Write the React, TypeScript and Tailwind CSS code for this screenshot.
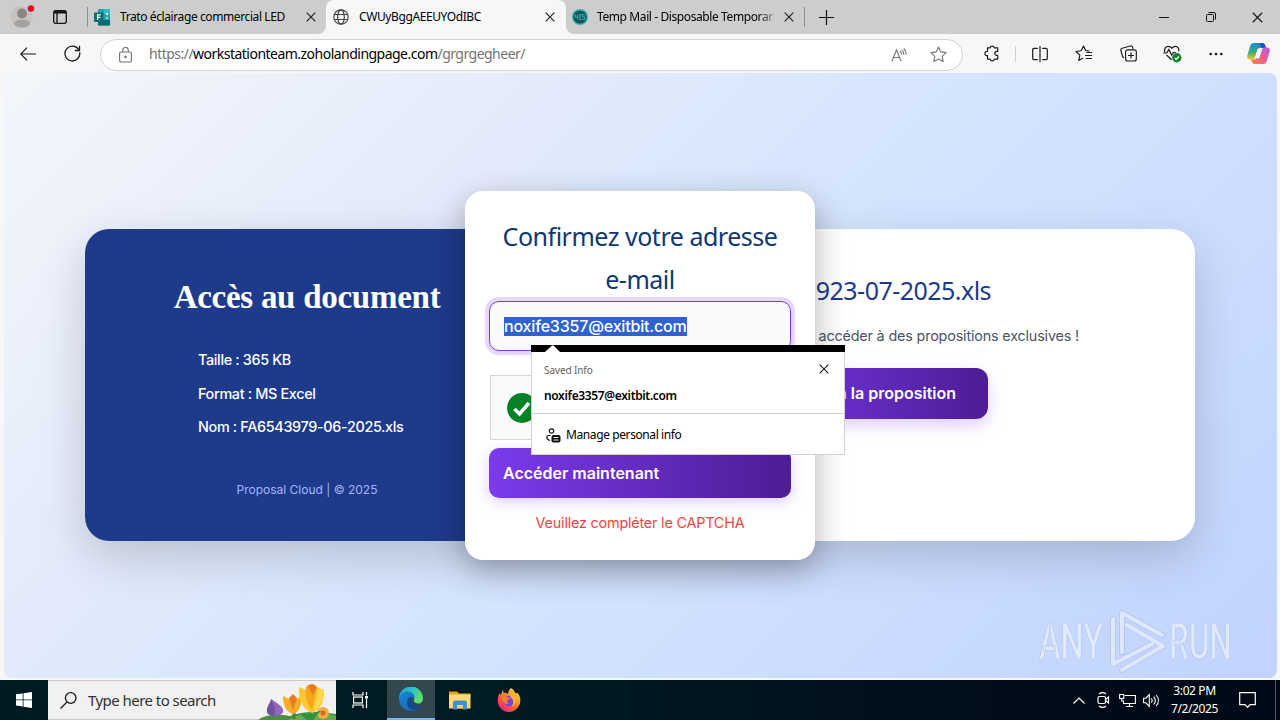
import type { ReactNode } from "react";

const UI = "font-['Noto_Sans','Open_Sans',sans-serif]";
const INTER = "font-['Inter',sans-serif]";

function CloseIcon({ size = 10 }: { size?: number }) {
  return (
    <svg width={size} height={size} viewBox="0 0 10 10" fill="none" stroke="#1b1b1b" strokeWidth="1.1">
      <path d="M.7.7l8.6 8.6M9.3.7L.7 9.3" />
    </svg>
  );
}

function GlobeIcon() {
  return (
    <svg width="16" height="16" viewBox="0 0 16 16" fill="none" stroke="#444" strokeWidth="1.2">
      <circle cx="8" cy="8" r="7.2" />
      <ellipse cx="8" cy="8" rx="3.3" ry="7.2" />
      <path d="M1.4 5.5h13.2M1.4 10.5h13.2" />
    </svg>
  );
}

function FormsIcon() {
  return (
    <svg width="17" height="17" viewBox="0 0 17 17">
      <rect x="4" y="0" width="12" height="16.500" rx="1.300" fill="#27a2a5" />
      <path d="M10 0h4.700A1.300 1.300 0 0116 1.300V5h-6z" fill="#35bdbd" />
      <path d="M4 11h12v4.200a1.300 1.300 0 01-1.300 1.300H5.300A1.300 1.300 0 014 15.200z" fill="#0b6a70" />
      <rect x="0" y="3.500" width="9.500" height="9.500" rx="1" fill="#066f75" />
      <path d="M3.600 11V5.800h3.200M3.600 8.300h2.800" stroke="#fff" strokeWidth="1.200" fill="none" />
      <circle cx="13" cy="5" r="1.200" fill="#b9eeee" />
      <circle cx="13" cy="9" r="1.200" fill="#9bdcdc" />
    </svg>
  );
}

function TempMailIcon() {
  return (
    <svg width="16" height="16" viewBox="0 0 16 16">
      <circle cx="8" cy="8" r="8" fill="#31b5a5" />
      <circle cx="8" cy="8" r="6.600" fill="#14545f" />
      <path d="M3.500 5.500v2.700h2.300M5.800 5.500v5M7.500 5.500h2.300M8 5.500v5h1.500M12.800 5.700h-2.300v2.300h2v2.400h-2.300" stroke="#35b6a6" strokeWidth="1" fill="none" />
    </svg>
  );
}

function TabBar() {
  return (
    <div className={`flex h-[34px] items-center bg-[#cdcdcd] text-[12px] text-black ${UI}`}>
      <div className="flex w-11 justify-center pl-0.5">
        <svg width="26" height="26" viewBox="0 0 26 26">
          <circle cx="11.500" cy="13" r="11" fill="#c6c3c1" />
          <circle cx="12" cy="9.500" r="5" fill="#8b8785" />
          <ellipse cx="12" cy="19.500" rx="8" ry="4" fill="#a6a29f" />
          <circle cx="21" cy="4.500" r="3.200" fill="#d4101f" />
        </svg>
      </div>
      <div className="flex w-8 justify-center">
        <svg width="14" height="14" viewBox="0 0 14 14" fill="none" stroke="#111" strokeWidth="1.300">
          <rect x=".7" y=".7" width="12.600" height="12.600" rx="2" />
          <path d="M.7 2.300h12.600" strokeWidth="2.400" />
          <path d="M4 3v10.300" />
        </svg>
      </div>
      <div className="ml-[11px] h-5 w-px bg-[#8f8f8f]" />
      <div className="h-full w-[238px] bg-[#f7f7f7]">
        <div className="flex h-full items-center rounded-br-lg bg-[#cdcdcd] pl-1.5">
          <FormsIcon />
          <span className="ml-[9px] w-[172px] whitespace-nowrap tracking-[-0.4px]">Trato éclairage commercial LED</span>
          <span className="ml-[14px]"><CloseIcon /></span>
        </div>
      </div>
      <div className="h-full w-[240px] bg-[#cdcdcd]">
        <div className="flex h-full items-center rounded-t-lg bg-[#f7f7f7] pl-[7px]">
          <GlobeIcon />
          <span className="ml-[10px] w-[177px] tracking-[-0.4px]">CWUyBggAEEUYOdIBC</span>
          <span className="ml-[9px]"><CloseIcon /></span>
        </div>
      </div>
      <div className="h-full w-[238px] bg-[#f7f7f7]">
        <div className="flex h-full items-center rounded-bl-lg bg-[#cdcdcd] pl-1.5">
          <TempMailIcon />
          <span className="ml-[9px] w-[179px] bg-gradient-to-r from-black from-88% to-[#b5b5b5] bg-clip-text tracking-[-0.4px] whitespace-nowrap text-transparent">
            Temp Mail - Disposable Temporar
          </span>
          <span className="ml-[8px]"><CloseIcon /></span>
        </div>
      </div>
      <div className="h-5 w-px bg-[#8f8f8f]" />
      <svg className="ml-[14px]" width="15" height="15" viewBox="0 0 15 15" stroke="#111" strokeWidth="1.200">
        <path d="M7.500 0v15M0 7.500h15" />
      </svg>
      <div className="ml-auto flex items-center">
        <svg width="10" height="10" viewBox="0 0 10 10" stroke="#111"><path d="M0 5.500h10" /></svg>
        <svg className="ml-[37px]" width="10" height="10" viewBox="0 0 10 10" fill="none" stroke="#111">
          <rect x=".5" y="2.500" width="7" height="7" rx="1" />
          <path d="M2.500.5H8A1.500 1.500 0 019.500 2v5.500" />
        </svg>
        <span className="mr-[17px] ml-[36px]"><CloseIcon size={11} /></span>
      </div>
    </div>
  );
}

function ToolButton({ children }: { children: ReactNode }) {
  return <div className="flex w-11 shrink-0 items-center justify-center">{children}</div>;
}

function CopilotIcon() {
  return (
    <svg width="23" height="21" viewBox="0 0 23 21">
      <defs>
        <linearGradient id="cpA" x1="0" y1="0" x2="0" y2="1">
          <stop offset="0" stopColor="#1787d8" />
          <stop offset=".55" stopColor="#37ae72" />
          <stop offset="1" stopColor="#f4c42c" />
        </linearGradient>
        <linearGradient id="cpB" x1="1" y1="0" x2="0" y2="1">
          <stop offset="0" stopColor="#b35be4" />
          <stop offset=".5" stopColor="#ec5a92" />
          <stop offset="1" stopColor="#f58b3c" />
        </linearGradient>
      </defs>
      <path d="M7 0h8.500c1.500 0 2.200 1 2.700 2.500l.8 2.500H13c-1.500 0-2.300.8-2.800 2.300L8 14.500C7.500 16 6.500 16.500 5 16.500H3C.8 16.500-.3 14.800.3 12.500L3.300 2.800C3.900.9 5 0 7 0z" fill="url(#cpA)" />
      <path d="M12.500 0h3c1.500 0 2.200 1 2.700 2.500l.8 2.500h-4.500z" fill="#1f52c7" />
      <path d="M16 21H7.500c-1.500 0-2.200-1-2.700-2.500L4 16.500h2.500c1.500 0 2.300-.3 2.800-1.800L10 12.500l-.6 3h1.100c1.500 0 1.900-.5 2.300-1.800L15 6.500C15.500 5 16.500 4.500 18 4.500h2c2.200 0 3.300 1.700 2.700 4l-3 9.700c-.6 1.900-1.700 2.800-3.700 2.800z" fill="url(#cpB)" />
      <path d="M10.500 6.200h4L12.300 14.500h-4z" fill="#f7f7f7" />
    </svg>
  );
}

function Toolbar() {
  return (
    <div className="flex h-[39px] items-center bg-[#f7f7f7]">
      <div className="flex w-[50px] justify-center pl-1.5">
        <svg width="16" height="14" viewBox="0 0 16 14" fill="none" stroke="#1b1b1b" strokeWidth="1.200">
          <path d="M16 7H1M7 .7L.8 7 7 13.300" />
        </svg>
      </div>
      <div className="flex w-[50px] justify-center pr-1.5">
        <svg width="17" height="17" viewBox="0 0 17 17" fill="none" stroke="#1b1b1b" strokeWidth="1.300">
          <path d="M15.700 7.300A7.400 7.400 0 112.900 3.600 7.400 7.400 0 0115 5.200" />
          <path d="M15.500.8v4.700h-4.700" />
        </svg>
      </div>
      <div className="mt-0.5 flex h-8 w-[863px] items-center rounded-full border border-[#d1d1d1] bg-white pl-[18px]">
        <svg width="13" height="16" viewBox="0 0 13 16" fill="none" stroke="#707070" strokeWidth="1.100">
          <rect x=".6" y="5" width="11.800" height="10" rx="1.500" />
          <path d="M3.700 5V3.300a2.800 2.800 0 015.600 0V5" />
          <circle cx="6.500" cy="10" r=".7" fill="#555" />
        </svg>
        <span className={`-mt-0.5 ml-[17px] text-[14px] tracking-[-0.52px] whitespace-nowrap text-[#737373] ${UI}`}>
          https://<span className="text-black">workstationteam.zoholandingpage.com</span>/grgrgegheer/
        </span>
        <div className="mr-[15px] ml-auto flex items-center gap-[23px]">
          <svg width="16" height="14" viewBox="0 0 16 14" fill="none" stroke="#777" strokeWidth="1.100">
            <path d="M.8 13.300L5.500 2l4.700 11.300M2.500 9.500h6" />
            <path d="M9 3.200c1 .8 1.500 2 1.500 3.300M10.800 1.800c1.400 1.300 2.100 3 2.100 4.900M12.700.5c1.700 1.700 2.600 3.800 2.600 6.200" />
          </svg>
          <svg width="17" height="17" viewBox="0 0 17 17" fill="none" stroke="#777" strokeWidth="1.100" strokeLinejoin="round">
            <path d="M8.500 1l2.300 4.900 5.300.7-3.900 3.700 1 5.300-4.700-2.600-4.700 2.600 1-5.300L.9 6.600l5.300-.7z" />
          </svg>
        </div>
      </div>
      <div className="ml-auto flex items-center pr-0.5">
        <ToolButton>
          <svg width="17" height="17" viewBox="0 0 17 17" fill="none" stroke="#1b1b1b" strokeWidth="1.200" strokeLinejoin="round">
            <path d="M3.500 2.800h2.600a2.200 2.200 0 014.300 0h3.300V6.400h-.9a2 2 0 100 4h.9v3.700h-3.300a2.200 2.200 0 01-4.300 0H3.500v-3.500a2.200 2.200 0 110-4.300z" />
          </svg>
        </ToolButton>
        <div className="mr-[2px] ml-px h-4 w-px bg-[#cfcfcf]" />
        <ToolButton>
          <svg width="16" height="16" viewBox="0 0 16 16" fill="none" stroke="#1b1b1b" strokeWidth="1.200">
            <path d="M8 0v16M5.800 2.400H2A1.300 1.300 0 00.7 3.700v8.600A1.300 1.300 0 002 13.600h3.800M10.200 2.400H14a1.300 1.300 0 011.300 1.300v8.600a1.300 1.300 0 01-1.300 1.300h-3.800" />
          </svg>
        </ToolButton>
        <ToolButton>
          <svg width="18" height="17" viewBox="0 0 18 17" fill="none" stroke="#1b1b1b" strokeWidth="1.150" strokeLinejoin="round">
            <path d="M14.500 6l-3.900-.4L8.500 1 6.200 5.700l-5.300.8 3.900 3.700-1 5.200L8 13M11.500 7.500h5.500M10 10.500h7M10.800 13.500h6.200" />
          </svg>
        </ToolButton>
        <ToolButton>
          <svg width="17" height="17" viewBox="0 0 17 17" fill="none" stroke="#1b1b1b" strokeWidth="1.150">
            <path d="M13 3.800l-.5-1.600A1.800 1.800 0 0010.300 1L2.200 3.200A1.900 1.900 0 00.9 5.500l1.700 6a1.900 1.900 0 001.500 1.300" />
            <rect x="5.600" y="4.800" width="10.700" height="11.200" rx="2" />
            <path d="M11 7.500v6M8 10.500h6" />
          </svg>
        </ToolButton>
        <ToolButton>
          <svg width="19" height="18" viewBox="0 0 19 18" fill="none" stroke="#1b1b1b" strokeWidth="1.200">
            <path d="M1.800 7.500C.8 4 2.600 1.300 5.300 1.300c1.800 0 2.700.9 3.400 2 .8-1.100 1.800-2 3.500-2 2.700 0 4.200 2.400 3.500 5M3.500 10l5 4.800" />
            <path d="M.3 8h3.500l2-3.500L8.700 10l1.600-2.500h2.500" />
            <circle cx="13.800" cy="12.800" r="4.700" fill="#16832a" stroke="none" />
            <path d="M11.700 13l1.500 1.400 2.700-2.900" stroke="#fff" />
          </svg>
        </ToolButton>
        <ToolButton>
          <svg width="14" height="4" viewBox="0 0 14 4" fill="#1b1b1b">
            <circle cx="1.700" cy="2" r="1.300" /><circle cx="7" cy="2" r="1.300" /><circle cx="12.300" cy="2" r="1.300" />
          </svg>
        </ToolButton>
        <div className="flex w-10 justify-center"><CopilotIcon /></div>
      </div>
    </div>
  );
}

const FILE_INFO = ["Taille : 365 KB", "Format : MS Excel", "Nom : FA6543979-06-2025.xls"];

function DocumentCard() {
  return (
    <div className={`mt-[155px] ml-[81px] flex h-[312px] w-[1110px] overflow-hidden rounded-[24px] bg-white shadow-[0_16px_48px_rgba(0,0,0,0.18)] ${INTER}`}>
      <div className="flex w-[444px] flex-col items-center bg-[#1e3a8a] text-white">
        <h1 className="mt-12 font-['Liberation_Serif',serif] text-[33px] leading-[40px] font-bold tracking-[-0.27px] whitespace-nowrap">Accès au document</h1>
        <ul className="mt-[30px] w-[218px] text-[14.4px] leading-[25.500px] font-medium tracking-[-0.34px]">
          {FILE_INFO.map((line) => (
            <li key={line} className="mb-2 whitespace-nowrap">{line}</li>
          ))}
        </ul>
        <p className="mt-[32px] text-[12px] leading-5 text-[#a5b4fc]">Proposal Cloud | © 2025</p>
      </div>
      <div className="flex flex-1 flex-col items-end">
        <h2 className={`mt-10 mr-[204px] text-[25px] leading-[43px] tracking-[-0.53px] text-[#1e3a8a] ${UI}`}>923-07-2025.xls</h2>
        <p className="mt-3 mr-[116px] text-[14.400px] leading-6 tracking-[-0.18px] text-[#4b5563]">accéder à des propositions exclusives !</p>
        <button className="mt-5 mr-[207px] h-[51px] w-[252px] rounded-xl bg-gradient-to-r from-[#7c3aed] to-[#4c1d95] pr-8 pb-0.5 text-right text-[16px] font-semibold text-white shadow-[0_6px_16px_rgba(124,58,237,0.25)]">
          à la proposition
        </button>
      </div>
    </div>
  );
}

function SavedInfoPopup() {
  return (
    <div className={`absolute top-[154px] left-[66px] h-[110px] w-[314px] border border-t-0 border-[#d0d0d0] bg-white text-black ${UI}`}>
      <div className="-mx-px h-[7px] bg-black pl-[14px]">
        <svg width="16" height="7" viewBox="0 0 16 7"><path d="M0 7L7 .5h1.500L15 7z" fill="#fff" /></svg>
      </div>
      <div className="flex h-[33px] items-center justify-between pr-[15px] pl-3">
        <span className="mt-[3px] text-[10px] tracking-[-0.1px] text-[#616161]">Saved Info</span>
        <CloseIcon />
      </div>
      <div className="h-[29px] border-b border-[#d0d0d0] pt-[3px]">
        <p className="pl-3 text-[12px] leading-4 font-semibold tracking-[-0.35px]">noxife3357@exitbit.com</p>
      </div>
      <div className="flex h-[40px] items-center pt-0.5 pl-[14px]">
        <svg width="15" height="15" viewBox="0 0 15 15" fill="none" stroke="#111" strokeWidth="1.200">
          <circle cx="5.500" cy="3" r="2.200" />
          <path d="M4.500 7.500H2.200C1.300 7.500.8 8 .8 9c0 1.800 1.200 3 3 3.500" />
          <rect x="5.500" y="7" width="9" height="7.500" rx="2" fill="#111" stroke="none" />
          <path d="M7.500 9.500h5M7.500 12h5" stroke="#fff" strokeWidth=".9" />
        </svg>
        <span className="ml-[5px] text-[12px] tracking-[-0.4px]">Manage personal info</span>
      </div>
    </div>
  );
}

function EmailModal() {
  return (
    <div className={`absolute top-[118px] left-[461px] h-[369px] w-[350px] rounded-[18px] bg-white px-6 pt-6 shadow-[0_10px_32px_rgba(0,0,0,0.3)] ${INTER}`}>
      <h2 className={`text-center text-[25px] leading-[43px] tracking-[-0.48px] text-[#0f3772] ${UI}`}>
        Confirmez votre adresse
        <br />
        e-mail
      </h2>
      <div className="flex h-[50px] items-center rounded-[10px] border border-[#7c3aed] bg-[#f8fafc] px-3.5 shadow-[0_0_0_4px_rgba(124,58,237,0.2)]">
        <span className="bg-[#2f62cc] text-[16px] leading-[19px] font-medium tracking-[-0.18px] text-white">noxife3357@exitbit.com</span>
      </div>
      <div className="mt-6 ml-px flex h-[65px] w-[300px] items-center border border-[#d6d6d6] bg-[#fafafa] pl-4">
        <svg width="30" height="30" viewBox="0 0 30 30">
          <circle cx="15" cy="15" r="15" fill="#038127" />
          <path d="M7.500 16l5 5 9.500-11" fill="none" stroke="#fff" strokeWidth="3.500" />
        </svg>
      </div>
      <button className="mt-[8px] block h-[50px] w-full rounded-[10px] bg-gradient-to-r from-[#7c3aed] to-[#4c1d95] pl-3.5 text-left text-[16px] font-semibold text-white shadow-[0_4px_14px_rgba(124,58,237,0.25)]">
        Accéder maintenant
      </button>
      <p className="mt-[13px] text-center text-[14.400px] leading-6 tracking-[-0.2px] text-[#ef4444]">Veuillez compléter le CAPTCHA</p>
      <SavedInfoPopup />
    </div>
  );
}

function Watermark() {
  return (
    <svg className="absolute right-[37px] bottom-[3px] opacity-75" width="204" height="68" viewBox="0 0 204 68">
      <g fill="#eaf1ff" stroke="#a9b9dd" strokeWidth=".7" fontFamily="Roboto, sans-serif" fontSize="50" fontWeight="500">
        <text x="3" y="51.500" textLength="64" lengthAdjust="spacingAndGlyphs">ANY</text>
        <text x="133" y="51.500" textLength="63" lengthAdjust="spacingAndGlyphs">RUN</text>
      </g>
      <g fill="none" strokeLinecap="round" strokeLinejoin="round">
        <path d="M86 45V6l40 22M77 12v45l39-20M86 63l41-24-36-21" stroke="#9fb0d8" strokeWidth="6" opacity=".5" />
        <path d="M86 45V6l40 22M77 12v45l39-20M86 63l41-24-36-21" stroke="#e6eeff" strokeWidth="4" />
      </g>
    </svg>
  );
}

function PageView() {
  return (
    <div className="bg-[#f7f7f7] px-[4px] pr-[3px] pb-[2px]">
      <div className="relative h-[605px] overflow-hidden rounded-lg bg-[linear-gradient(135deg,#f3f7fb_0%,#e5ebfb_28%,#d8e7fd_45%,#cfdfff_68%,#c1d3ff_100%)] pt-px">
        <DocumentCard />
        <EmailModal />
        <Watermark />
      </div>
    </div>
  );
}

function Flowers() {
  return (
    <svg className="ml-auto" width="78" height="39" viewBox="0 0 78 39">
      <path d="M0 39c8-6 20-6 32-4 12-5 28-5 46-2v6z" fill="#4b8f40" />
      <path d="M30 39c12-8 32-9 48-4v4z" fill="#69a950" />
      <path d="M36 38V26M53 37V25" stroke="#348b3b" strokeWidth="3" />
      <path d="M13 18c-1 5-5 8-4 13 1 5 13 6 16 0 1-4-5-7-12-13z" fill="#7252a0" />
      <path d="M13 18c2 6 6 9 3 17 5 0 9-3 9-6-1-4-5-6-12-11z" fill="#9168bd" />
      <path d="M25 15l6 3 4-4 4 4 4-3c1 8-1 16-8 18-7-2-10-9-10-18z" fill="#f8af24" />
      <path d="M31 17l4-4 4 4-4 12z" fill="#e97b20" />
      <path d="M41 6l7 3 4-6 7 3 7 3c1 12-4 20-12 23-9-3-14-14-13-26z" fill="#ffc931" />
      <path d="M48 6c5-5 9-2 11 1l-5 22c-5-6-7-14-6-23z" fill="#f6a51e" />
      <path d="M50 5l5-2 4 3-4 8z" fill="#e87722" />
      <path d="M61 8l5 1c0 8-3 16-10 21z" fill="#ffda4e" />
      <circle cx="65" cy="32" r="6" fill="#f4ac45" />
      <circle cx="65" cy="32" r="2.500" fill="#d26b20" />
      <path d="M43 34c4-3 8-3 10 3 2-5 6-7 10-7-3 3-6 6-8 9h-6z" fill="#2f9142" />
    </svg>
  );
}

function EdgeIcon() {
  return (
    <svg width="24" height="24" viewBox="0 0 24 24">
      <defs>
        <linearGradient id="edgeTop" x1="0" y1="0" x2="1" y2=".5">
          <stop offset="0" stopColor="#249ddd" />
          <stop offset=".55" stopColor="#2fc6c6" />
          <stop offset="1" stopColor="#66dd65" />
        </linearGradient>
        <linearGradient id="edgeLow" x1="0" y1="0" x2="1" y2="1">
          <stop offset="0" stopColor="#178bdc" />
          <stop offset="1" stopColor="#1658a7" />
        </linearGradient>
      </defs>
      <path d="M0 12a12 12 0 0124-1c0 4-2.500 6-6 6-2.500 0-4-1-4-2.500z" fill="url(#edgeTop)" />
      <path d="M0 12c.4-5 4.500-7.500 9-7.500 4 0 6.500 2.500 6.500 5.500 0 1.500-1 2.300-1 3.600 0 2.400 3.500 3.900 8 2.900l.3 1.500A12 12 0 0112 24 12 12 0 010 12z" fill="url(#edgeLow)" />
      <path d="M8 15c0-2.500 1.300-4.400 3.500-5.200 2.500 1 2.500 2.700 2.800 4.200.5 2.200 4 3.600 8.200 3l.3 1A12 12 0 0116 23c-4.500 0-8-3.500-8-8z" fill="#114a8c" />
      <path d="M12 11.500c-.8 1.800-.3 4.500 1.700 6 2.300 1.700 5.800 1.600 9-.3l-.6-.7c-4.200 1-7.600-.2-7.700-2.900 0-1 .6-1.600.9-2.600-1-.7-2.500-.5-3.300.5z" fill="#33474f" />
    </svg>
  );
}

function FirefoxIcon() {
  return (
    <svg width="24" height="24" viewBox="0 0 24 24">
      <defs>
        <linearGradient id="ffx" x1="1" y1="0" x2=".2" y2="1">
          <stop offset="0" stopColor="#fff044" />
          <stop offset=".4" stopColor="#ff9a26" />
          <stop offset=".75" stopColor="#ff4647" />
          <stop offset="1" stopColor="#e5218b" />
        </linearGradient>
      </defs>
      <path d="M14 0c2 1 3.500 3 3.800 4.500C19 5 20 5.500 20.500 4.800 22.500 7 23.500 10 23.300 13 23 19 18 24 12 24S.7 19 .7 13C.7 9.500 1.500 7 3 5l.5 2.500C4.500 5 5 3 6 2l.8 3C9 4.500 10 5.500 11 6c0-2.500 1-4.500 3-6z" fill="url(#ffx)" />
      <circle cx="12.300" cy="13" r="5.600" fill="#7745d8" />
      <path d="M4.500 9c2-1.500 4-1 6 .3 1 .4 2.500.2 3 .7-.7 1.700-3 1.500-3.500 3.300.3 1 1 1.500 1.800 1.700-1.800 1.500-4.800 1-5.800-1.500-1-1-1.500-3-1.500-4.500z" fill="#ff7a2d" />
      <path d="M14 4c3 1.500 5 5 4.600 9-.3 3-2 5-4.600 6 3-3 3-7 0-9.500-1-1.500-1-3.700 0-5.500z" fill="#ffb432" />
    </svg>
  );
}

function Taskbar() {
  return (
    <div className={`flex h-10 bg-linear-to-r from-[#001a22] from-40% to-[#010a17] to-90% text-white ${UI}`}>
      <div className="flex w-12 items-center justify-center">
        <svg width="16" height="16" viewBox="0 0 16 16" fill="#fff">
          <path d="M0 2.300l6.700-.9v6.100H0zM7.500 1.300L16 0v7.500H7.500zM0 8.300h6.700v6.200L0 13.600zM7.500 8.300H16V16l-8.500-1.300z" />
        </svg>
      </div>
      <div className="flex w-[288px] items-center border-y border-[#c9c9c9] bg-[#f1f1f1] pl-3">
        <svg width="17" height="17" viewBox="0 0 17 17" fill="none" stroke="#1b1b1b" strokeWidth="1.300">
          <circle cx="10.700" cy="6" r="5.300" />
          <path d="M7 10L.5 16.500" />
        </svg>
        <span className="ml-[11px] text-[15px] tracking-[-0.55px] whitespace-nowrap text-[#303030]">Type here to search</span>
        <Flowers />
      </div>
      <div className="flex w-[51px] items-center justify-center pr-0.5">
        <svg width="17" height="16" viewBox="0 0 17 16" fill="none" stroke="#fff" strokeWidth="1.200">
          <path d="M1 0v3h10V0M1 16v-3h10v3M14.500 0v3.500M14.500 7v9" />
          <rect x="1.600" y="5" width="8.800" height="6" />
          <path d="M13 5.300h3" strokeWidth="2.500" />
        </svg>
      </div>
      <div className="flex w-12 items-center justify-center border-b-2 border-[#76b9ed] bg-[#33474f]"><EdgeIcon /></div>
      <div className="flex w-[50px] items-center justify-center">
        <svg width="22" height="19" viewBox="0 0 22 19">
          <path d="M0 .5h8l2 2h11.500V6H0z" fill="#e9a41b" />
          <path d="M0 3.500h21.500v14H0z" fill="#ffda73" />
          <path d="M4 18.500V11l1.500-1.500h11L18 11v7.500h-4V14H8v4.500z" fill="#3c91d0" />
          <path d="M8 14h6v3.500H8z" fill="#f5cd61" />
        </svg>
      </div>
      <div className="flex w-12 items-center justify-center"><FirefoxIcon /></div>
      <div className="ml-auto flex items-center">
        <svg width="12" height="7" viewBox="0 0 12 7" fill="none" stroke="#fff" strokeWidth="1.200"><path d="M.5 6.500L6 1l5.500 5.500" /></svg>
        <svg className="ml-3" width="13" height="16" viewBox="0 0 13 16" fill="none" stroke="#fff" strokeWidth="1.200">
          <rect x="1" y="4.500" width="7.500" height="7" rx="1.500" />
          <path d="M8.500 7.500L11.500 5v6l-3-2.500M2 2C4 .3 7 .3 9 2M2 14c2 1.700 5 1.700 7 0" />
        </svg>
        <svg className="ml-[9px]" width="17" height="15" viewBox="0 0 17 15" fill="none" stroke="#fff" strokeWidth="1.100">
          <path d="M5.500 2.500h10.900v8H4.500V8M7 13.500h7M10.500 10.500v3" />
          <path d="M.6 1.500h4.200v4H.6zM2.700 5.500V8H5" />
        </svg>
        <svg className="ml-[7px]" width="17" height="15" viewBox="0 0 17 15" fill="none" stroke="#fff" strokeWidth="1.100">
          <path d="M.6 5.200h2.200l3.500-3.500v11.600L2.800 9.800H.6zM8.300 5.300c1 1.300 1 3.100 0 4.400M10.700 3.700c2 2.300 2 5.300 0 7.600M13.200 2c2.900 3.300 2.900 7.700 0 11" />
        </svg>
        <div className="ml-[7px] w-[55px] text-center text-[12px] leading-[18px] tracking-[-0.4px] whitespace-nowrap">
          <div>3:02 PM</div>
          <div>7/2/2025</div>
        </div>
        <svg className="ml-[17px]" width="17" height="16" viewBox="0 0 17 16" fill="none" stroke="#fff" strokeWidth="1.200">
          <path d="M.7.7h15.600v12h-5.200L8.500 15.200 6 12.700H.7z" />
        </svg>
        <div className="mr-1 ml-[19px] h-10 w-px bg-[#4b535d]" />
      </div>
    </div>
  );
}

export default function App() {
  return (
    <div className="h-[720px] w-[1280px] overflow-hidden bg-[#f7f7f7]">
      <TabBar />
      <Toolbar />
      <PageView />
      <Taskbar />
    </div>
  );
}
